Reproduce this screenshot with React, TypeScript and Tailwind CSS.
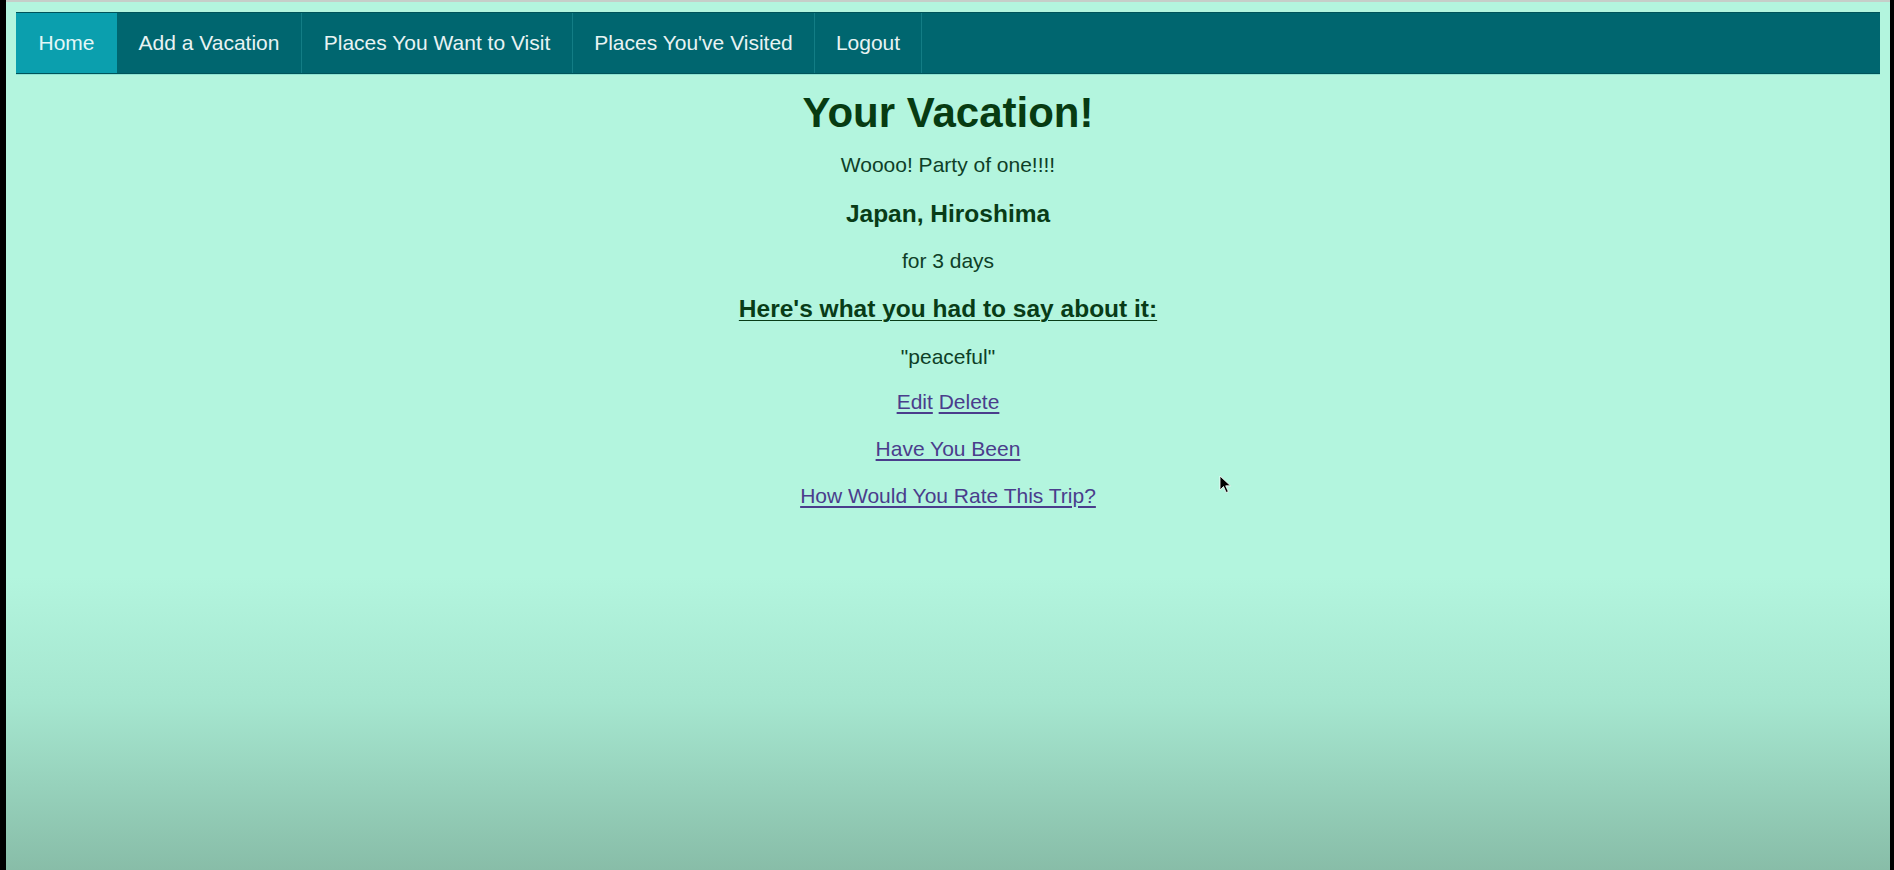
import React from "react";

const tabs = [
  { label: "Home", w: "w-[101px]", active: true },
  { label: "Add a Vacation", w: "w-[185px]" },
  { label: "Places You Want to Visit", w: "w-[271px]" },
  { label: "Places You've Visited", w: "w-[242px]" },
  { label: "Logout", w: "w-[107px]" },
];

export default function App() {
  return (
    <div
      className="flex h-[870px] w-full overflow-hidden bg-black"
      style={{ fontFamily: '"Liberation Sans", Arial, sans-serif' }}
    >
      <div className="w-[6px] shrink-0 bg-black" />
      <main className="relative flex flex-1 flex-col border-t-2 border-[#c6cec9] bg-[linear-gradient(to_bottom,#b3f5de_0px,#b3f5de_575px,#a5e6cf_700px,#88bda8_868px)]">
        <nav className="mx-[10px] mt-[10px] flex h-[62px] border-y border-[#00535a] bg-[#00666f] shadow-[0_1px_0_#8fe3d3]">
          {tabs.map((t) => (
            <a
              key={t.label}
              className={`${t.w} flex items-center justify-center text-[21px] ${
                t.active
                  ? "bg-[#0b9fae] text-[#e4f7f7]"
                  : "border-r border-[#137d85] text-[#e8f3f3]"
              }`}
            >
              {t.label}
            </a>
          ))}
        </nav>

        <section className="flex flex-col items-center text-center text-[#0e3f27]">
          <h1 className="mt-[16px] text-[42px] font-bold leading-[46px] text-[#073b12]">
            Your Vacation!
          </h1>
          <p className="mt-[18px] text-[21px] leading-[22px]">Woooo! Party of one!!!!</p>
          <h3 className="mt-[24px] text-[24.5px] font-bold leading-[28px] text-[#083c17]">
            Japan, Hiroshima
          </h3>
          <p className="mt-[22px] text-[21px] leading-[22px]">for 3 days</p>
          <h3 className="mt-[23px] text-[24.5px] font-bold leading-[28px] text-[#083c17] underline decoration-1 underline-offset-[3px]">
            Here's what you had to say about it:
          </h3>
          <p className="mt-[23px] text-[21px] leading-[22px]">"peaceful"</p>
          <p className="mt-[23px] text-[21px] leading-[22px] text-[#4a3d8c]">
            <a className="underline underline-offset-[3px]">Edit</a>{" "}
            <a className="underline underline-offset-[3px]">Delete</a>
          </p>
          <p className="mt-[25px] text-[21px] leading-[22px] text-[#4a3d8c]">
            <a className="underline underline-offset-[3px]">Have You Been</a>
          </p>
          <p className="mt-[25px] text-[21px] leading-[22px] text-[#4a3d8c]">
            <a className="underline underline-offset-[3px]">How Would You Rate This Trip?</a>
          </p>
        </section>

        <svg
          className="absolute left-[1213px] top-[473px]"
          width="14"
          height="20"
          viewBox="0 0 14 20"
        >
          <path
            d="M1 1 L1 15 L4.5 11.5 L7.2 17.5 L9.3 16.6 L6.7 10.8 L11.5 10.8 Z"
            fill="#000"
            stroke="#ffffff"
            strokeWidth="0.8"
          />
        </svg>
      </main>
      <div className="w-[4px] shrink-0 bg-black" />
    </div>
  );
}
